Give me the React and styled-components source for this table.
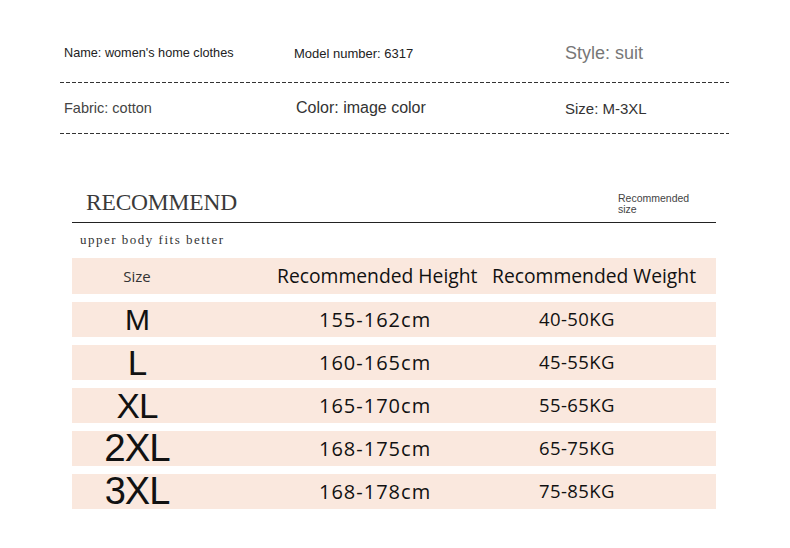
import React from 'react';
import styled, { createGlobalStyle } from 'styled-components';

const sizes = [
  { label: 'M', fs: 30, height: '155-162cm', weight: '40-50KG' },
  { label: 'L', fs: 35, height: '160-165cm', weight: '45-55KG' },
  { label: 'XL', fs: 35, height: '165-170cm', weight: '55-65KG' },
  { label: '2XL', fs: 38.5, height: '168-175cm', weight: '65-75KG' },
  { label: '3XL', fs: 38, height: '168-178cm', weight: '75-85KG' }
];

const GlobalStyles = createGlobalStyle`
  body {
    margin: 0;
    padding: 0;
    background: #fff;
    color: #111;
    font-family: "Liberation Sans", Arial, sans-serif;
  }
`;

const Page = styled.div`
  width: 790px;
  height: 548px;
  overflow: hidden;
`;

const Info = styled.div`
  width: 669px;
  margin-left: 60px;
  padding-top: 28px;
`;

const InfoRow = styled.div`
  display: grid;
  grid-template-columns: 230px 271px 1fr;
  align-items: center;
  padding-left: 4px;
  height: 50px;
  padding-bottom: ${p => p.$pb || 0}px;
`;

const InfoItem = styled.div`
  font-size: ${p => p.$fs}px;
  color: ${p => p.$color || '#222'};
  white-space: nowrap;
  margin-left: ${p => p.$shift || 0}px;
`;

const Dashes = styled.div`
  height: 1px;
  background: repeating-linear-gradient(to right, #333 0 4px, transparent 4px 6px);
`;

const RecommendBar = styled.div`
  display: flex;
  justify-content: space-between;
  align-items: flex-end;
  width: 644px;
  height: 38px;
  margin: 50px 0 0 72px;
  border-bottom: 1px solid #222;
`;

const Title = styled.div`
  font-family: "Liberation Serif", "Times New Roman", serif;
  font-size: 23.5px;
  line-height: 1;
  letter-spacing: -0.2px;
  color: #3a3a3a;
  padding: 0 0 8px 14px;
`;

const SizeNote = styled.div`
  width: 98px;
  font-size: 10.5px;
  line-height: 11px;
  color: #444;
  padding-bottom: 7px;
`;

const Subtitle = styled.div`
  font-family: "Liberation Serif", "Times New Roman", serif;
  font-size: 13px;
  line-height: 16px;
  letter-spacing: 1.5px;
  color: #333;
  margin: 9px 0 0 80px;
`;

const Table = styled.div`
  display: flex;
  flex-direction: column;
  gap: 8px;
  width: 644px;
  margin: 10px 0 0 72px;
  font-family: "Open Sans", "Noto Sans", sans-serif;
`;

const Row = styled.div`
  display: grid;
  grid-template-columns: 130px 290px 1fr;
  align-items: center;
  height: ${p => (p.$head ? 36 : 35)}px;
  background: #fae8de;
  color: #111;
`;

const SizeCell = styled.div`
  text-align: center;
  font-family: ${p => (p.$head ? '"Open Sans", sans-serif' : '"Liberation Sans", Arial, sans-serif')};
  font-size: ${p => p.$fs}px;
  line-height: 0.85;
  letter-spacing: ${p => (p.$head ? 0 : -1)}px;
  color: ${p => (p.$head ? '#333' : '#111')};
`;

const Cell = styled.div`
  padding-left: ${p => p.$pad}px;
  font-size: ${p => p.$fs}px;
  letter-spacing: ${p => p.$ls || 0}px;
  white-space: nowrap;
  line-height: 1;
`;

function App() {
  return (
    <Page>
      <GlobalStyles />
      <Info>
        <InfoRow $pb={4}>
          <InfoItem $fs={12.7}>Name: women's home clothes</InfoItem>
          <InfoItem $fs={13}>Model number: 6317</InfoItem>
          <InfoItem $fs={18} $color="#777">Style: suit</InfoItem>
        </InfoRow>
        <Dashes />
        <InfoRow>
          <InfoItem $fs={14.5} $color="#444">Fabric: cotton</InfoItem>
          <InfoItem $fs={16} $color="#333" $shift={2}>Color: image color</InfoItem>
          <InfoItem $fs={15} $color="#333">Size: M-3XL</InfoItem>
        </InfoRow>
        <Dashes />
      </Info>

      <RecommendBar>
        <Title>RECOMMEND</Title>
        <SizeNote>
          Recommended
          <br />
          size
        </SizeNote>
      </RecommendBar>
      <Subtitle>upper body fits better</Subtitle>

      <Table>
        <Row $head>
          <SizeCell $head $fs={15}>Size</SizeCell>
          <Cell $pad={75} $fs={19.3}>Recommended Height</Cell>
          <Cell $pad={0} $fs={19.3}>Recommended Weight</Cell>
        </Row>
        {sizes.map(s => (
          <Row key={s.label}>
            <SizeCell $fs={s.fs}>{s.label}</SizeCell>
            <Cell $pad={117} $fs={20} $ls={1}>{s.height}</Cell>
            <Cell $pad={47} $fs={18.5} $ls={0.4}>{s.weight}</Cell>
          </Row>
        ))}
      </Table>
    </Page>
  );
}

export default App;
